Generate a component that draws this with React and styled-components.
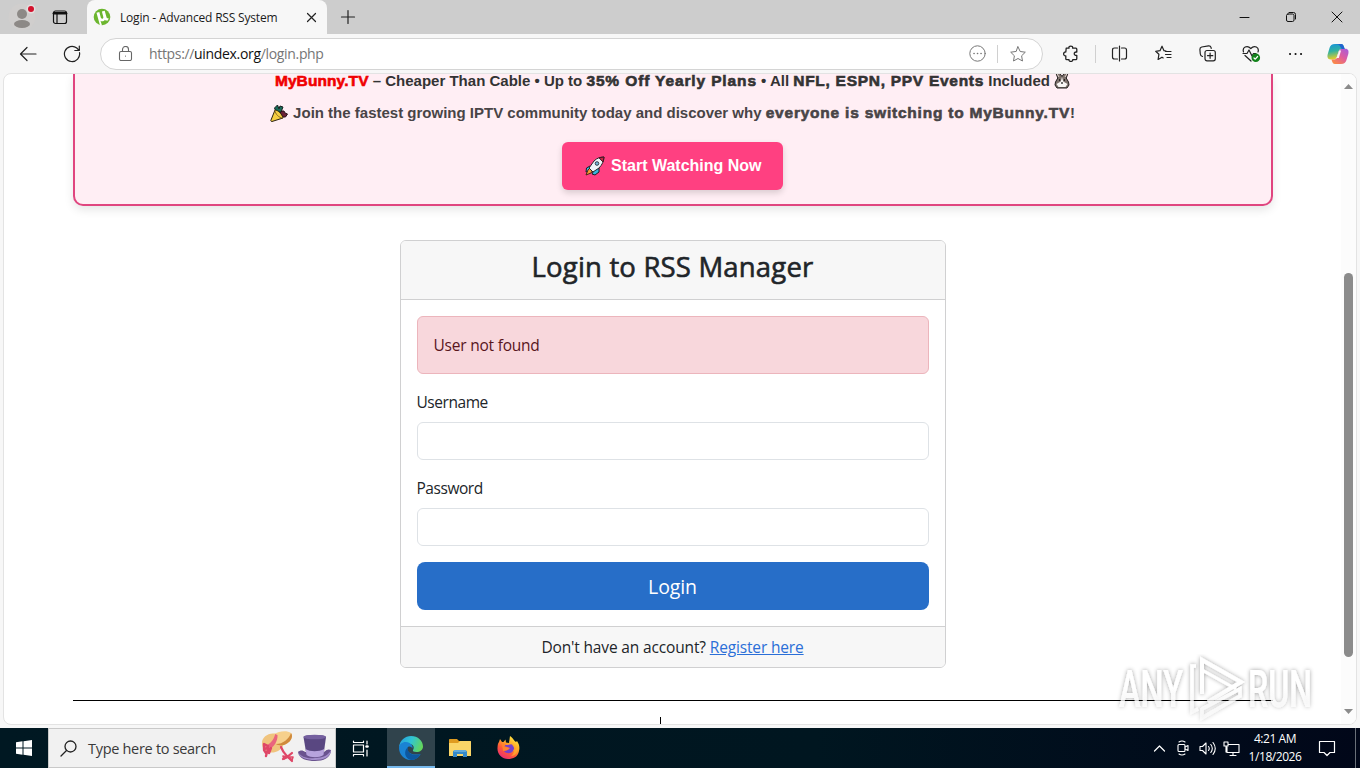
import React, { useState } from 'react';
import styled, { createGlobalStyle } from 'styled-components';

const GlobalStyle = createGlobalStyle`
  * {
    box-sizing: border-box;
  }
  body {
    margin: 0;
    overflow: hidden;
    font-family: "Open Sans", "Noto Sans", sans-serif;
    color: #212529;
  }
  svg {
    display: block;
    flex: none;
  }
`

const Desktop = styled.div`
  display: flex;
  flex-direction: column;
  width: 1360px;
  height: 768px;
  overflow: hidden;
  background-color: #f7f7f7;
`

/* ---------- browser ---------- */

const TitleBar = styled.div`
  display: flex;
  height: 34px;
  background-color: #cdcdcd;
`

const Cell = styled.div`
  display: flex;
  flex: none;
  align-items: center;
  justify-content: center;
  width: ${(props) => props.$width || 44}px;
  height: 100%;
`

const Tab = styled.div`
  display: flex;
  align-items: center;
  width: 240px;
  height: 34px;
  margin-left: 11px;
  padding: 0 9px 0 6px;
  border-radius: 8px 8px 0 0;
  background-color: #f7f7f7;
`

const TabTitle = styled.div`
  flex: 1;
  margin-left: 9px;
  font-size: 12px;
  letter-spacing: -0.19px;
  white-space: nowrap;
  color: #1b1b1b;
`

const Spacer = styled.div`
  flex: 1;
`

const Toolbar = styled.div`
  display: flex;
  align-items: center;
  height: 39px;
  padding-left: 6px;
  background-color: #f7f7f7;
`

const AddressBar = styled.div`
  display: flex;
  align-items: center;
  width: 943px;
  height: 32px;
  margin: 0 6px;
  padding: 0 16px 0 17px;
  border: 1px solid #d4d4d4;
  border-radius: 16px;
  background-color: white;
`

const Url = styled.div`
  flex: 1;
  margin-left: 16px;
  font-size: 14px;
  letter-spacing: -0.33px;
  white-space: nowrap;
  color: #767676;
  b {
    font-weight: normal;
    color: #111;
  }
`

const Divider = styled.div`
  width: 1px;
  height: 18px;
  margin: ${(props) => props.$margin || '0 1px 0 2px'};
  background-color: #d0d0d0;
`

const PageFrame = styled.div`
  position: relative;
  display: flex;
  width: 1354px;
  height: 652px;
  margin: 0 3px 3px;
  border: 1px solid #e3e3e3;
  border-radius: 8px;
  overflow: hidden;
  background-color: white;
`

const Page = styled.div`
  flex: 1;
  display: flex;
  flex-direction: column;
  align-items: center;
  height: 650px;
  > * {
    flex: none;
  }
`

const ScrollBar = styled.div`
  display: flex;
  flex-direction: column;
  align-items: center;
  width: 15px;
  height: 650px;
  padding: 10px 0 10px;
  background-color: #fcfcfc;
`

const Thumb = styled.div`
  width: 9px;
  height: 384px;
  margin: 184px 0 auto;
  border-radius: 5px;
  background-color: #8b8b8b;
`

/* ---------- page ---------- */

const Banner = styled.div`
  display: flex;
  flex-direction: column;
  align-items: center;
  width: 1200px;
  height: 132px;
  border: 2px solid #e0457f;
  border-top: none;
  border-radius: 0 0 10px 10px;
  background-color: #ffeef4;
  box-shadow: 0 4px 10px rgba(0, 0, 0, 0.1);
  font-family: "Liberation Sans", Arial, sans-serif;
`

const BannerLine = styled.div`
  display: flex;
  align-items: center;
  height: ${(props) => props.$height}px;
  margin-bottom: ${(props) => props.$gap}px;
  font-size: 15px;
  font-weight: bold;
  line-height: ${(props) => props.$height}px;
  white-space: pre;
  color: ${(props) => props.$color};
`

const Run = styled.span`
  letter-spacing: ${(props) => props.$spacing || 0}px;
`

const Strong = styled(Run)`
  color: ${(props) => props.$color || 'inherit'};
  font-size: 15.5px;
  -webkit-text-stroke: 0.6px currentColor;
`

const WatchButton = styled.button`
  display: flex;
  align-items: center;
  width: 221px;
  height: 48px;
  padding: 0 0 0 23px;
  border: none;
  border-radius: 6px;
  background-color: #ff4081;
  box-shadow: 0 3px 6px rgba(0, 0, 0, 0.15);
  color: white;
  font-family: inherit;
  font-size: 16px;
  font-weight: bold;
  white-space: nowrap;
  span {
    margin-left: 6px;
  }
`

const LoginCard = styled.div`
  width: 546px;
  height: 428px;
  margin-top: 34px;
  border: 1px solid #d0d0d1;
  border-radius: 6px;
  overflow: hidden;
  font-size: 15.5px;
  line-height: 24px;
`

const CardHeader = styled.div`
  height: 59px;
  padding-top: 9px;
  border-bottom: 1px solid #d0d0d1;
  background-color: #f7f7f7;
  text-align: center;
  h3 {
    margin: 0;
    font-size: 27.5px;
    font-weight: 500;
    line-height: 34px;
    letter-spacing: 0.18px;
    -webkit-text-stroke: 0.6px currentColor;
  }
`

const CardBody = styled.form`
  display: flex;
  flex-direction: column;
  height: 326px;
  padding: 16px;
`

const Alert = styled.div`
  height: 58px;
  margin-bottom: 16px;
  padding: 16px;
  border: 1px solid #ecb5bc;
  border-radius: 6px;
  background-color: #f8d7dc;
  color: #58151c;
  letter-spacing: -0.22px;
`

const Label = styled.label`
  height: 24px;
  margin-bottom: 8px;
  letter-spacing: -0.45px;
`

const Input = styled.input`
  height: 38px;
  margin-bottom: 16px;
  padding: 6px 12px;
  border: 1px solid #dee2e6;
  border-radius: 6px;
  font-size: 16px;
  outline: none;
`

const LoginButton = styled.button`
  height: 48px;
  padding: 2px 0 0;
  border: none;
  border-radius: 8px;
  background-color: #276ec8;
  color: white;
  font-family: inherit;
  font-size: 19.5px;
  line-height: 30px;
  letter-spacing: -0.1px;
`

const CardFooter = styled.div`
  height: 41px;
  padding-top: 8px;
  border-top: 1px solid #d0d0d1;
  background-color: #f7f7f7;
  letter-spacing: -0.15px;
  text-align: center;
  a {
    color: #2b6fd8;
    text-decoration: underline;
  }
`

const Rule = styled.div`
  width: 1200px;
  height: 1px;
  margin-top: 32px;
  background-color: black;
`

const Caret = styled.div`
  width: 1px;
  height: 8px;
  margin: 16px 25px 0 0;
  background-color: black;
`

const Watermark = styled.svg`
  position: absolute;
  right: 36px;
  bottom: 0;
`

/* ---------- taskbar ---------- */

const TaskBar = styled.div`
  display: flex;
  height: 40px;
  background: linear-gradient(90deg, #001822 0%, #001620 60%, #010b1b 88%, #010719 100%);
`

const SearchBox = styled.div`
  display: flex;
  align-items: center;
  width: 288px;
  height: 40px;
  padding: 0 4px 0 11px;
  border: 1px solid #c9c9c9;
  background-color: #f1f1f1;
  font-size: 14.5px;
  letter-spacing: -0.3px;
  color: #3a3a3a;
  span {
    flex: 1;
    margin-left: 11px;
    white-space: nowrap;
  }
`

const HatPair = styled.div`
  display: flex;
  align-items: center;
  gap: 3px;
`

const TaskButton = styled(Cell)`
  width: 48px;
  margin-right: ${(props) => props.$gap || 0}px;
  background-color: ${(props) => (props.$active ? '#30434c' : 'transparent')};
  box-shadow: ${(props) => (props.$active ? 'inset 0 -2px #76b9ed' : 'none')};
`

const Clock = styled.div`
  width: 64px;
  padding: 2px 0 0 0;
  font-size: 12px;
  letter-spacing: -0.45px;
  line-height: 17.5px;
  text-align: center;
  white-space: nowrap;
  color: white;
`

const ShowDesktop = styled.div`
  width: 5px;
  border-left: 1px solid #6a7079;
`

function Line({ size = 18, box = 18, color = '#222', width = 1.2, children }) {
  return (
    <svg width={size} height={size} viewBox={`0 0 ${box} ${box}`} fill="none" stroke={color}
      strokeWidth={width} strokeLinecap="round" strokeLinejoin="round">
      {children}
    </svg>
  )
}

const STAR = "M8 .8l2.200 4.700 5.100.700-3.700 3.600.900 5.200L8 12.500l-4.500 2.500.900-5.200L.700 6.200l5.100-.700z"

function Profile() {
  return (
    <svg width="28" height="28" viewBox="0 0 28 28">
      <circle cx="14" cy="14" r="13.500" fill="#d0cecd" />
      <circle cx="14" cy="11" r="5" fill="#8d8986" />
      <ellipse cx="14" cy="21" rx="8" ry="4" fill="#8d8986" />
      <circle cx="23" cy="6" r="4.500" fill="#e4dedd" />
      <circle cx="23" cy="6" r="3" fill="#d3122d" />
    </svg>
  )
}

function TorrentLogo() {
  return (
    <svg width="18" height="18" viewBox="0 0 18 18">
      <circle cx="9" cy="9" r="8.300" fill="#6cb62f" />
      <path d="M3.500 4.700l2.800-.7 1.500 5.600c.5 1.800 3 1.200 2.500-.7L8.900 3.400l2.800-.7 1.900 6.900c.3.900 1 .9 2 .5l-.6 2.300c-1.500.5-2.600.1-3.100-.7-.9 1.600-3.100 2.200-4.400 1l1.500 4.800-2.200-.8z" fill="white" />
    </svg>
  )
}

function Copilot() {
  return (
    <svg width="22" height="22" viewBox="0 0 22 22">
      <defs>
        <linearGradient id="copilotLeft" x1="0" y1="0" x2="0.2" y2="1">
          <stop offset="0" stopColor="#1793dc" />
          <stop offset="0.500" stopColor="#31b2a0" />
          <stop offset="1" stopColor="#e5cd29" />
        </linearGradient>
        <linearGradient id="copilotRight" x1="1" y1="0" x2="0.2" y2="1">
          <stop offset="0" stopColor="#a25ce0" />
          <stop offset="0.500" stopColor="#df5c9f" />
          <stop offset="1" stopColor="#fb8a45" />
        </linearGradient>
      </defs>
      <path d="M8 1h6c2 0 2.600 1.600 3.200 3.500l.5 1.500h-3.200c-1.800 0-2.500 1-3 2.700L9.800 14c-.5 1.600-1.300 2.500-3 2.500H3.500C.7 16.500 0 14 .7 11.300l1.900-6.600C3.300 2.400 4.800 1 8 1z" fill="url(#copilotLeft)" />
      <path d="M14 21H8c-2 0-2.600-1.600-3.200-3.500l-.3-1h2.700c1.800 0 2.600-1 3.100-2.700L12 8.300c.5-1.600 1.200-2.500 3-2.500h3.500c2.800 0 3.500 2.500 2.800 5.200l-1.900 6.300C18.700 19.600 17.200 21 14 21z" fill="url(#copilotRight)" />
      <path d="M8 1h6c2 0 2.600 1.600 3.200 3.500l.5 1.500h-3L13 3.200C12.400 1.800 11 1 8 1z" fill="#2063ce" />
      <path d="M12.300 7.500h1.800l-2.300 7.500H9.500z" fill="#fbf3f4" />
    </svg>
  )
}

function Bunny() {
  return (
    <svg width="16" height="16" viewBox="0 2 16 16">
      <path d="M1.500 1l2.300 6-2.300 4-.5 3 2 3h10l2-3-.5-3-2.300-4 2.300-6-4 1L8 5.500 5.500 2z" fill="#7d716c" stroke="#252221" strokeLinejoin="round" />
      <path d="M2.500 2l2.500 4M13.500 2L11 6" stroke="#e0d2cd" />
      <path d="M8 6l1.200 4.500 4.300 2.500-2 3h-7l-2-3 4.300-2.500z" fill="#f8f6f4" />
      <path d="M5 9h1.200M9.800 9H11M7.200 12h1.600" stroke="#111" strokeWidth="1.600" />
    </svg>
  )
}

function Party() {
  return (
    <svg width="19" height="18" viewBox="0 0 19 18" strokeLinejoin="round">
      <path d="M6 8L4.500 4l3-3 1.500 4 1-3 3 1-2 5z" fill="#176b59" stroke="#17221f" />
      <path d="M10 9l2-2 2 0 1 2 2.500 1-2 3h-3z" fill="#6b2237" stroke="#291219" />
      <path d="M5 6c3 0 7 4 8 8L2 17.500c-1 0-1.500-.6-1-1.500z" fill="#f5ce42" stroke="#292112" />
      <path d="M5 6c0 4 4 8 8 8" fill="none" stroke="#8b6b21" />
    </svg>
  )
}

function Rocket() {
  return (
    <svg width="20" height="20" viewBox="0 0 20 20" strokeLinejoin="round">
      <path d="M5 10L1.500 12 1 16l4-1zM9 14l5-2v4l-4 3-3-1z" fill="#36b5dc" stroke="#182126" />
      <path d="M3 14l-2 5 5-2 2-3-3-2z" fill="#f59a31" stroke="#4a2418" />
      <path d="M4 12L9 5c3-3 6-4 10-4 0 4-2 8-5 11l-6 4z" fill="#eef3f8" stroke="#28282c" />
      <path d="M14 1.800L19 1l-1 5z" fill="#c62642" stroke="#451323" />
      <circle cx="12" cy="7.500" r="1.800" fill="#77b9dd" stroke="#333d48" />
    </svg>
  )
}

function SunHat() {
  return (
    <svg width="34" height="34" viewBox="0 0 34 34">
      <path d="M1 12C1 6 8 1 15 3c5 1 9 7 7 12-3 6-12 9-18 4-2-1-3-4-3-7z" fill="#f0c47e" />
      <path d="M13 3c5-3 13-4 17-1 3 4-1 10-7 12-4 1-8 0-9-3z" fill="#f6d08c" />
      <path d="M30 2c3 4-1 10-7 12-3 .8-6 .5-8-1 7 0 13-5 15-11z" fill="#cf8a3c" />
      <path d="M4 15c5-2 9-6 10-12l2.500 1C17 10 13 17 6 19z" fill="#e9647e" />
      <g fill="none" stroke="#df4767" strokeLinecap="round" strokeLinejoin="round">
        <path d="M7 15l-4-2 0 5 4-1 1 5 2-5M3 19l2 3 3-4M6 21l-1 4" strokeWidth="2.400" />
        <path d="M20 16q2 5 5 8l6 6M31 22q-4 4-9 6" strokeWidth="2.200" />
        <path d="M27 26l-5-1 1 3zM27 26l5 0-1 3z" strokeWidth="1.600" />
      </g>
    </svg>
  )
}

function TopHat() {
  return (
    <svg width="33" height="28" viewBox="0 0 33 28">
      <path d="M0 18c2-2 5-2 7 0h19c3-3 5-3 7-2 0 8-8 11-16 11S1 25 0 18z" fill="#6a538f" />
      <path d="M0 18c3 5 9 7 17 6 8 0 14-3 16-8 0 7-8 10-16 10S2 24 0 18z" fill="#a590cd" />
      <path d="M5.500 3c0-2.500 22-3 22.500 0l-2.500 18c-3 3-13 3-17 0z" fill="#594781" />
      <ellipse cx="16.700" cy="3" rx="11.200" ry="2.300" fill="#75609f" />
      <path d="M7.500 15c5 3 13 3 18.800 0l-.8 6c-4 3-13 3-17 0z" fill="#b7a3dd" />
    </svg>
  )
}

function Edge() {
  return (
    <svg width="24" height="24" viewBox="0 0 24 24">
      <defs>
        <linearGradient id="edgeTop" x1="0" y1="0.2" x2="1" y2="0.5">
          <stop offset="0" stopColor="#259fe0" />
          <stop offset="0.500" stopColor="#31c5d2" />
          <stop offset="1" stopColor="#63d65c" />
        </linearGradient>
      </defs>
      <path d="M0 11C1 4 6 0 12 0c7 0 12 5 12 10.500 0 3.500-3 5.500-6.500 5.500-3 0-4-1-3.500-2 2-3 0-6-4-6-5 0-9 2-10 3z" fill="url(#edgeTop)" />
      <path d="M0 12C0 7 6 4.500 10.500 7c2 1 3.500 3 3 5.500-1-2-4-3-5-.5-1 4 4 8 13 6-2 4-6 6-10 6C5 24 0 18 0 12z" fill="#1a83d3" />
      <path d="M9 11c-1.500 5 4 10 12.500 7-2 4-5.500 6-9.500 6-6-1-8-9-3-13z" fill="#0d579f" />
    </svg>
  )
}

function Explorer() {
  return (
    <svg width="22" height="19" viewBox="0 0 22 19">
      <path d="M0 1c0-.6.4-1 1-1h7l2 2h11c.6 0 1 .4 1 1v3H0z" fill="#df9b20" />
      <path d="M0 4h9l2-2h10c.6 0 1 .4 1 1v14H0z" fill="#fad568" />
      <path d="M4 18v-5c0-1 1-2 2-2h10c1 0 2 1 2 2v5h-4v-3H8v3z" fill="#3589ca" />
      <path d="M5 11h12v2H5z" fill="#62a9da" />
    </svg>
  )
}

function Firefox() {
  return (
    <svg width="24" height="24" viewBox="0 0 24 24">
      <defs>
        <linearGradient id="firefoxBody" x1="0.800" y1="0" x2="0.2" y2="1">
          <stop offset="0" stopColor="#fff04a" />
          <stop offset="0.350" stopColor="#ffad26" />
          <stop offset="0.650" stopColor="#ff5938" />
          <stop offset="1" stopColor="#e9277b" />
        </linearGradient>
      </defs>
      <path d="M2 6l1-3 2 3 1.500 0 2-2.500.5 3L12 7l1-7c4 3 4 5 6 6l1-1c2 3 3 6 2 10-1 6-6 8-11 8C5 23 0 18 .5 12 .6 9 1 7 2 6z" fill="url(#firefoxBody)" />
      <path d="M8 9l3 0 4-1c2 2 3 4 1 7-2 3-7 3-9 0l4-1 2-2-3-1-3-1z" fill="#7541cc" />
      <path d="M12 5c6 1 7 6 4 10 3-1 4-4 4-6 2 6-1 11-6 11 5-4 4-9 0-12z" fill="#ffb12e" opacity="0.700" />
      <path d="M5 8l4 0-2 3 5 1c-1 2-3 3-6 3z" fill="#ff8430" />
    </svg>
  )
}

function BrowserBar() {
  return (
    <>
      <TitleBar>
        <Cell><Profile /></Cell>
        <Cell $width={32}>
          <Line size={16} box={16} color="#111" width={1.2}>
            <rect x="1.500" y="2" width="13" height="12.500" rx="2" />
            <path d="M2 4.200h12" strokeWidth="2.600" />
            <path d="M5 5v9" />
          </Line>
        </Cell>
        <Tab>
          <TorrentLogo />
          <TabTitle>Login - Advanced RSS System</TabTitle>
          <Line size={13} box={13} color="#222"><path d="M2.500 2.500l8 8M10.500 2.500l-8 8" /></Line>
        </Tab>
        <Cell $width={42}>
          <Line size={16} box={16} color="#222"><path d="M8 1.500v13M1.500 8h13" /></Line>
        </Cell>
        <Spacer />
        <Cell $width={46}>
          <Line size={12} box={12} color="#111" width={1}><path d="M1 6.500h9" /></Line>
        </Cell>
        <Cell $width={46}>
          <Line size={12} box={12} color="#111" width={1}>
            <rect x="1.500" y="3" width="7.500" height="7.500" rx="1.500" />
            <path d="M4 1.500h4.500a2 2 0 012 2V8" />
          </Line>
        </Cell>
        <Cell $width={46}>
          <Line size={12} box={12} color="#111" width={1}><path d="M1 1l10 10M11 1L1 11" /></Line>
        </Cell>
      </TitleBar>
      <Toolbar>
        <Cell><Line><path d="M17 9H1.500M8 2.500L1.500 9 8 15.500" /></Line></Cell>
        <Cell><Line><path d="M16.500 7.500A7.600 7.600 0 1 1 13.800 3L16 5.300M16.300 1v4.500h-4.500" /></Line></Cell>
        <AddressBar>
          <Line size={15} box={15} color="#666" width={1.1}>
            <rect x="1.500" y="5.500" width="12" height="9" rx="1.500" />
            <path d="M4.500 5.500v-2a3 3 0 016 0v2M7.500 10v.1" />
          </Line>
          <Url>https://<b>uindex.org</b>/login.php</Url>
          <Line size={17} box={17} color="#777" width={1}>
            <circle cx="8.500" cy="8.500" r="7.700" />
            <path d="M5 8.500h.1M8.500 8.500h.1M12 8.500h.1" strokeWidth="1.600" />
          </Line>
          <Divider $margin="0 12px 0 11px" />
          <Line size={16} box={16} color="#777" width={1}><path d={STAR} /></Line>
        </AddressBar>
        <Cell>
          <Line size={17} box={17} width={1.3}>
            <path d="M3.200 3.200H6C5.200.300 10.400.300 9.600 3.200h3.200q1 0 1 1v2.900c-3.400-.8-3.400 4 0 3.200v3.200q0 1.200-1 1.200H9.700c.5 2.300-4.200 2.300-3.700 0H3.800q-1 0-1-1v-2.900c-2.900.5-2.900-4.300 0-3.800z" />
          </Line>
        </Cell>
        <Divider />
        <Cell>
          <Line size={17} box={17}>
            <path d="M6.500 3h-3Q1.500 3 1.500 5v7q0 2 2 2h3M10.500 3h3q2 0 2 2v7q0 2-2 2h-3M8.500 1v15" />
          </Line>
        </Cell>
        <Cell>
          <Line size={17} box={17}>
            <path d="M11 6L9 5.700 7 1.200 5 5.700.7 6.300l3.200 3-.8 5.200L7 12.200l1.200.7M10.500 6.500H16M10.500 9.500H16M12 12.500h4" />
          </Line>
        </Cell>
        <Cell>
          <Line size={17} box={17}>
            <rect x="6" y="5.500" width="10.300" height="10.300" rx="2" />
            <path d="M11.100 8v5.300M8.500 10.700h5.300M3.500 11.500Q1.500 11 1.300 9L.900 4.500Q.800 2.500 2.700 2L9.500 .900q2-.2 2.500 1.500l.200 1" />
          </Line>
        </Cell>
        <Cell>
          <svg width="19" height="18" viewBox="0 0 19 18" fill="none" stroke="#222" strokeWidth="1.2" strokeLinecap="round" strokeLinejoin="round">
            <path d="M1.500 7C0 2.500 5-.5 8.800 3.500 12.500-.5 17.500 2.500 16 7M3 10.500l6 5.500M1 8.500h4L7 5l3 6 1.500-2.500H14" />
            <circle cx="13.800" cy="12.800" r="4.300" fill="#13831b" stroke="none" />
            <path d="M12 13l1.300 1.200 2.300-2.700" stroke="white" />
          </svg>
        </Cell>
        <Cell>
          <Line size={16} box={16} color="#111" width={2}><path d="M3 8h.1M8.500 8h.1M14 8h.1" /></Line>
        </Cell>
        <Cell $width={41}><Copilot /></Cell>
      </Toolbar>
    </>
  )
}

function PromoBanner() {
  return (
    <Banner>
      <BannerLine $height={14} $gap={15} $color="#333">
        <Strong $color="#f00000" $spacing={0.1}>MyBunny.TV</Strong>
        <Run> – Cheaper Than Cable • Up to </Run>
        <Strong $spacing={0.87}>35% Off Yearly Plans</Strong>
        <Run> • All </Run>
        <Strong $spacing={0.72}>NFL, ESPN, PPV Events</Strong>
        <Run> Included </Run>
        <Bunny />
      </BannerLine>
      <BannerLine $height={20} $gap={19} $color="#484446">
        <Party />
        <Run> Join the fastest growing IPTV community today and discover why </Run>
        <Strong $spacing={0.78}>everyone is switching to MyBunny.TV</Strong>
        <Run>!</Run>
      </BannerLine>
      <WatchButton>
        <Rocket />
        <span>Start Watching Now</span>
      </WatchButton>
    </Banner>
  )
}

function LoginForm() {
  const [logininfo, setLogininfo] = useState({
    username: "",
    password: ""
  });
  const [errormessage, setErrormessage] = useState('User not found');
  const handleInputValue = (key) => (e) => {
    setLogininfo({ ...logininfo, [key]: e.target.value });
  };
  const handleLogin = (e) => {
    e.preventDefault()
    setErrormessage('User not found')
  }

  return (
    <LoginCard>
      <CardHeader><h3>Login to RSS Manager</h3></CardHeader>
      <CardBody onSubmit={handleLogin}>
        <Alert>{errormessage}</Alert>
        <Label htmlFor="username">Username</Label>
        <Input id="username" type="text" value={logininfo.username} onChange={handleInputValue("username")} />
        <Label htmlFor="password">Password</Label>
        <Input id="password" type="password" value={logininfo.password} onChange={handleInputValue("password")} />
        <LoginButton type="submit">Login</LoginButton>
      </CardBody>
      <CardFooter>Don't have an account? <a href="#register">Register here</a></CardFooter>
    </LoginCard>
  )
}

function AnyRunMark() {
  return (
    <Watermark width="210" height="76" viewBox="0 0 210 76">
      <defs>
        <linearGradient id="markFade" x1="0" y1="8" x2="0" y2="72" gradientUnits="userSpaceOnUse">
          <stop offset="0.500" stopColor="white" />
          <stop offset="0.900" stopColor="white" stopOpacity="0.500" />
        </linearGradient>
        <filter id="markShadow" x="-10%" y="-10%" width="120%" height="120%">
          <feDropShadow dx="0" dy="0" stdDeviation="2" floodColor="#000" floodOpacity="0.380" />
        </filter>
      </defs>
      <g filter="url(#markShadow)">
        <g fill="url(#markFade)" fontFamily="Roboto, sans-serif" fontSize="51" fontWeight="500">
          <text x="9" y="59" textLength="64" lengthAdjust="spacingAndGlyphs">ANY</text>
          <text x="138" y="59" textLength="64" lengthAdjust="spacingAndGlyphs">RUN</text>
        </g>
        <g fill="none" stroke="url(#markFade)" strokeWidth="4">
          <path d="M92 46V12l39 22-33 20" />
          <path d="M86 18h-4v46l6-3M92 60v10l38-22v-7L92 61" strokeWidth="3.500" />
          <path d="M92 22l34 19" strokeWidth="3" />
        </g>
      </g>
    </Watermark>
  )
}

function Taskbar() {
  return (
    <TaskBar>
      <Cell $width={48}>
        <svg width="16" height="16" viewBox="0 0 16 16" fill="white">
          <path d="M0 2.200l6.500-.9v6.200H0zM7.500 1.200L16 0v7.500H7.500zM0 8.500h6.500v6.200L0 13.800zM7.500 8.500H16V16l-8.500-1.200z" />
        </svg>
      </Cell>
      <SearchBox>
        <Line size={17} box={17} color="#222" width={1.3}>
          <circle cx="10.500" cy="6.500" r="5.500" />
          <path d="M6.500 10.500L1 16" />
        </Line>
        <span>Type here to search</span>
        <HatPair>
          <SunHat />
          <TopHat />
        </HatPair>
      </SearchBox>
      <TaskButton $gap={3}>
        <Line size={17} box={17} color="white">
          <path d="M1.500 1v1.500h10V1M1.500 16v-1.500h10V16M15 1v3M15 10v6" />
          <rect x="1.500" y="5" width="10" height="7" />
          <path d="M14.500 6.500h1" strokeWidth="2.500" />
        </Line>
      </TaskButton>
      <TaskButton $active $gap={1}><Edge /></TaskButton>
      <TaskButton $gap={1}><Explorer /></TaskButton>
      <TaskButton><Firefox /></TaskButton>
      <Spacer />
      <Cell $width={24}>
        <Line size={13} box={13} color="white"><path d="M1.500 9l5-5 5 5" /></Line>
      </Cell>
      <Cell $width={24}>
        <Line size={16} box={16} color="white" width={1.1}>
          <rect x="3" y="4.500" width="7" height="7" rx="1" />
          <path d="M10 7l3-1.500v5L10 9M4 2q3-2 6 0M4 14q3 2 6 0" />
        </Line>
      </Cell>
      <Cell $width={24}>
        <Line size={17} box={17} color="white" width={1.1}>
          <path d="M1 6.500h2.500L7 3v11l-3.500-3.500H1zM9.500 6.500q1.500 2 0 4M11.800 4.500q3 4 0 8M14 2.500q4.500 6 0 12" />
        </Line>
      </Cell>
      <Cell $width={24}>
        <Line size={17} box={17} color="white" width={1.1}>
          <path d="M5 4.500h11v8H4V7M10 12.500v3M7 15.500h6M1 2h4v4H1zM3 6v6" />
        </Line>
      </Cell>
      <Clock>4:21 AM<br />1/18/2026</Clock>
      <Cell $width={40}>
        <Line size={18} box={18} color="white" width={1.2}>
          <path d="M1.500 2.500h15v11H12l-3 3-3-3H1.500z" />
        </Line>
      </Cell>
      <Cell $width={8} />
      <ShowDesktop />
    </TaskBar>
  )
}

export default function App() {
  return (
    <Desktop>
      <GlobalStyle />
      <BrowserBar />
      <PageFrame>
        <Page>
          <PromoBanner />
          <LoginForm />
          <Rule />
          <Caret />
        </Page>
        <ScrollBar>
          <svg width="9" height="5" viewBox="0 0 9 5"><path d="M0 5l4.500-5L9 5z" fill="#8b8b8b" /></svg>
          <Thumb />
          <svg width="9" height="5" viewBox="0 0 9 5"><path d="M0 0l4.500 5L9 0z" fill="#8b8b8b" /></svg>
        </ScrollBar>
        <AnyRunMark />
      </PageFrame>
      <Taskbar />
    </Desktop>
  )
}
